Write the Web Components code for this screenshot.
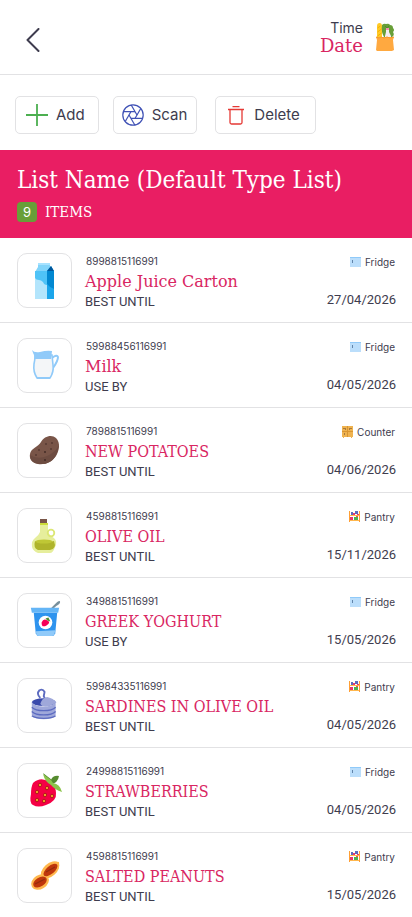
<!DOCTYPE html>
<html lang="en">
<head>
<meta charset="utf-8">
<meta name="viewport" content="width=device-width, initial-scale=1">
<title>Shopping list</title>
<style>
  :root {
    --ink: #3e3c4e;
    --pink: #e91e63;
    --name: #d92662;
    --line: #e2e2e4;
    --slab: "DejaVu Serif Condensed", "DejaVu Serif", serif;
    --slab-wide: "DejaVu Serif", serif;
  }
  body { margin: 0; background: #fff; color: var(--ink); font-family: Inter, "Liberation Sans", sans-serif; }
</style>
</head>
<body>
<list-page>
  <page-header slot="header" time="Time" date="Date"></page-header>
  <action-bar slot="actions">
    <action-button icon="add">Add</action-button>
    <action-button icon="scan">Scan</action-button>
    <action-button icon="delete" wide>Delete</action-button>
  </action-bar>
  <list-banner slot="banner" count="9">List Name (Default Type List)</list-banner>
  <food-item icon="carton" code="8998815116991" rule="BEST UNTIL" place="Fridge" date="27/04/2026">Apple Juice Carton</food-item>
  <food-item icon="jug" code="59988456116991" rule="USE BY" place="Fridge" date="04/05/2026">Milk</food-item>
  <food-item icon="potato" code="7898815116991" rule="BEST UNTIL" place="Counter" date="04/06/2026">NEW POTATOES</food-item>
  <food-item icon="oil" code="4598815116991" rule="BEST UNTIL" place="Pantry" date="15/11/2026">OLIVE OIL</food-item>
  <food-item icon="yoghurt" code="3498815116991" rule="USE BY" place="Fridge" date="15/05/2026">GREEK YOGHURT</food-item>
  <food-item icon="sardines" code="59984335116991" rule="BEST UNTIL" place="Pantry" date="04/05/2026">SARDINES IN OLIVE OIL</food-item>
  <food-item icon="strawberry" code="24998815116991" rule="BEST UNTIL" place="Fridge" date="04/05/2026">STRAWBERRIES</food-item>
  <food-item icon="peanut" code="4598815116991" rule="BEST UNTIL" place="Pantry" date="15/05/2026">SALTED PEANUTS</food-item>
</list-page>
<script>
const ICONS = {
  back: ['0 0 14 24', '<path d="M12.5 1 1.5 12l11 11" fill="none" stroke="#3e3c4e" stroke-width="2" stroke-linecap="round" stroke-linejoin="round"/>'],
  bag: ['0 0 20 30', `<path d="M2 15V4q0-3 2.500-3Q7 1 7 4v11z" fill="#ffca28"/><path d="m2.500 6 3-2M2.500 10l4-3M2.500 14l4-3" stroke="#f5b000" stroke-width="1"/>
    <path d="M7 3q2-2 4-1 3-1 4 1 3 0 3 3 2 2 0 4 2 3-1 5H9q-3-5-2-12z" fill="#689f38"/><path d="m10 4 2 2 2-2" stroke="#4b8128" stroke-width=".7" fill="none"/>
    <path d="M11 8h3v2l2 4v2h-6v-2l1-4z" fill="#f5eef4"/><path d="M11 6h3v2h-3z" fill="#f48fb1"/>
    <path d="M1 15h18l-1 3 1 10-2 1H2l-1-1 1-10z" fill="#ffa940"/><path d="m1 15 3 1 2-1 3 1 3-1 3 1 4-1" stroke="#f59a2c" fill="none"/>`],
  add: ['0 0 22 22', '<path d="M11 0v22M0 11h22" stroke="#4caf50" stroke-width="1.800"/>'],
  scan: ['0 0 22 22', `<g fill="none" stroke="#3f51b5" stroke-width="1.200"><circle cx="11" cy="11" r="10.200"/>
    ${[0,60,120,180,240,300].map(a => `<path transform="rotate(${a} 11 11)" d="M15 11 9.200 1"/>`).join('')}</g>`],
  delete: ['0 0 16 19', '<path d="M0 3.500h16M4.500.700h7M2 4v12.500q0 1.500 1.500 1.500h9q1.500 0 1.500-1.500V4" fill="none" stroke="#e53935" stroke-width="1.300"/>'],
  carton: ['1 1 40 40', `<path d="M11 12 14 7V3h12v4l-3 6z" fill="#81d4fa"/><path d="M14 3h12v2H14z" fill="#a7e2ff"/><path d="M11 11h12v28H11z" fill="#b3e5fc"/><path d="M23 11l4-5 3 5v28h-7z" fill="#039be5"/><path d="m23 11 4-5 3 5z" fill="#01579b"/><path d="M11 11h12v14q-3 0-4-3-2-2-4-2-3 0-4-2z" fill="#4fc3f7"/><path d="M23 11h7v18q-4-1-7-5z" fill="#0288d1"/><path d="M23 24q3 4 7 5v10h-7z" fill="#1ba5ea"/>`],
  jug: ['1 3 40 40', `<path d="M28 15q5-4 6-1 0 4-5 11" fill="none" stroke="#90caf9" stroke-width="2"/><path d="M11 12q0 5-1 9-1 8 3 14h13q4-6 3-13l-1-10z" fill="#f4f6f8" stroke="#90caf9" stroke-width="1.600"/><path d="M8 7q2 3 8 2 7-2 12-1l-1 8H11l-1-4q-1-2-2-5z" fill="#90caf9"/><path d="M13 34h13v2H13z" fill="#90caf9"/>`],
  potato: ['0 1 40 40', `<path d="M16 12C19 6 27 4 31 8c5 5 3 13 0 18-4 6-11 9-18 8-6-1-9-5-8-10 1-6 8-7 11-12z" fill="#795548"/><path d="M5 25q8 5 17 1 9-4 12-11-1 7-4 12-5 8-16 7-9-1-9-9z" fill="#6d4c41"/><g fill="#3e2723"><circle cx="21" cy="14" r=".800"/><circle cx="27" cy="13" r=".800"/><circle cx="14" cy="20" r=".800"/><circle cx="20" cy="22" r=".900"/><circle cx="26" cy="19" r=".800"/><circle cx="11" cy="25" r=".800"/><circle cx="20" cy="30" r=".900"/></g>`],
  oil: ['1 1 40 40', `<path d="M16 8h8v9q1 3 6 6 4 4 1 9-2 6-5 6H14q-5-2-6-6-1-6 3-9 4-3 5-6z" fill="#e6ee9c"/><circle cx="27" cy="18" r="3.300" fill="none" stroke="#dce775" stroke-width="1.800"/><path d="M11 26q6 4 19 0 3 8-4 9H14q-5-2-3-9z" fill="#afb42b"/><ellipse cx="20" cy="26.500" rx="8.500" ry="2" fill="#bfc735"/><path d="M16 8h8v2h-8z" fill="#cddc39"/><path d="M16 4h7v4h-7z" fill="#795548"/>`],
  yoghurt: ['1 2 41 41', `<path d="m28 9 6-6q3-2 3 0 0 2-4 4l-3 3z" fill="#78909c"/><path d="M10 14h24l-2 21-2 3H14l-2-3z" fill="#2e93ee"/><path d="M7 9h29l-1 5H8z" fill="#64b5f6"/><path d="m12 33 20-1-1 5-2 1H15l-2-1z" fill="#90caf9"/><circle cx="22" cy="24" r="7" fill="#fff"/><path d="M18 24q2-5 6-2 4 2-1 5-5 3-5-3z" fill="#f50057"/><path d="m22 20 3-1 2 4-3-1z" fill="#558b2f"/>`],
  sardines: ['-2 -1 47 47', `<path d="M16 13q-5-5-1-9 4-2 6 2l-1 5 2 4" fill="none" stroke="#5c6bc0" stroke-width="2.200"/><ellipse cx="20" cy="18" rx="14" ry="4.500" fill="#3949ab"/><path d="M6 18q4 5 14 5t14-5v15q-3 5-14 5T6 33z" fill="#9fa8da"/><path d="M16 20q2-7 8-8 6 1 11 6-5 4-13 5-5 0-6-3z" fill="#9fa8da"/><path d="M6 24q4 4 14 4t14-4M6 29q4 4 14 4t14-4M6 34q4 3 14 3t14-3" fill="none" stroke="#5c6bc0" stroke-width="1.600"/>`],
  strawberry: ['0 0 40 40', `<path d="M8 12q8-7 16-1 7 4 7 11 1 8-10 12-8 3-13 0-4-2-2-11 0-7 2-11z" fill="#f50045"/><path d="m18 2 9 7q-5 2-9-7zm8 7q2-5 8-4-1 7-8 8z" fill="#558b2f"/><path d="m18 3 8 6 2 3q7 1 9 9-7-2-11-7-6-3-8-11z" fill="#8bc34a"/>${[[15,14],[22,17],[12,21],[20,24],[12,29],[19,30],[27,25]].map(p=>`<ellipse cx="${p[0]}" cy="${p[1]}" rx="2" ry="2.200" transform="rotate(30 ${p[0]} ${p[1]})" fill="#b71c1c"/><circle cx="${p[0]}" cy="${p[1]}" r="1" fill="#ffca28"/>`).join('')}`],
  peanut: ['0 0 40 40', `<g fill="#ffb74d"><ellipse cx="25" cy="14" rx="11" ry="6.500" transform="rotate(-42 25 14)"/><ellipse cx="15" cy="26" rx="9.500" ry="7" transform="rotate(-32 15 26)"/><path d="M28 7q4-2 6-1 1 4-1 8z"/></g><g fill="#bf360c"><ellipse cx="25.500" cy="14" rx="8.500" ry="4" transform="rotate(-40 25.500 14)"/><ellipse cx="15" cy="26" rx="7.500" ry="4.500" transform="rotate(-32 15 26)"/></g><path d="m21 16 9-5M10 28l10-5" stroke="#932c0d" stroke-width="1.200"/>`],
  Fridge: ['0 0 11 10', '<path d="M0 0h11v10H0z" fill="#bbdefb"/><path d="M0 0h11v1H0z" fill="#90caf9"/><path d="M2 3h1v3H2z" fill="#6285ab"/>'],
  Counter: ['0 0 11 12', '<path d="M0 0h11v11h-1v1H9v-1H2v1H1v-1H0z" fill="#efb350"/><path d="M5 0h1v5H5zM0 5h11v1H0zM5 6h1v5H5z" fill="#d99531"/><path d="M1 2h3v1H1zm6 0h3v1H7zM3 3h1v1H3zm4 0h1v1H7zM2 7h1v2H2z" fill="#a87a3c"/>'],
  Pantry: ['0 0 11 12', '<path d="M1 4h9v1H1zm0 5h9v1H1z" fill="#ffb74d"/><path d="M0 0h1v11H0zm10 0h1v11h-1z" fill="#ff9f35"/><path d="M2 1h2v3H2zm4-1h3v3H6z" fill="#5c6bc0"/><path d="M4 2h2v2H4zm4 1h2v1H8zM1 6h3v3H1z" fill="#e53970"/><path d="M5 6h4v3H5z" fill="#4caf50"/><path d="M7 5h2v1H7z" fill="#ef5350"/>']
};

function define(name, html, setup) {
  const template = document.createElement('template');
  template.innerHTML = html;
  customElements.define(name, class extends HTMLElement {
    connectedCallback() {
      if (this.shadowRoot) return;
      this.attachShadow({ mode: 'open' }).append(template.content.cloneNode(true));
      if (setup) setup(this, s => this.shadowRoot.querySelector(s));
    }
  });
}

function icon(name) {
  const el = document.createElement('app-icon');
  el.setAttribute('name', name);
  return el;
}

define('app-icon', `<style>:host{display:block;flex:none} svg{display:block;width:100%;height:100%}</style><svg aria-hidden="true"></svg>`,
  (el, $) => {
    const [box, shapes] = ICONS[el.getAttribute('name')];
    $('svg').setAttribute('viewBox', box);
    $('svg').innerHTML = shapes;
  });

define('list-page', `<style>:host{display:block}</style>
  <slot name="header"></slot><main><slot name="actions"></slot><slot name="banner"></slot><div role="list"><slot></slot></div></main>`);

define('page-header', `<style>
  :host{display:block}
  header{display:flex;align-items:center;justify-content:space-between;height:74px;padding:0 17px 0 18px;border-bottom:1px solid var(--line)}
  button{display:grid;place-items:center;width:30px;height:40px;margin-top:6px;padding:0;border:0;background:none}
  .back{width:14px;height:24px}
  .side{display:flex;align-items:center;gap:12px}
  .when{display:grid;text-align:right;line-height:18px;font-size:14px}
  .date{font:18px/18px var(--slab-wide);color:var(--name)}
  .bag{width:20px;height:30px}
</style>
<header><button type="button" aria-label="Back"><app-icon class="back" name="back"></app-icon></button>
<div class="side"><div class="when"><span class="time"></span><span class="date"></span></div><app-icon class="bag" name="bag"></app-icon></div></header>`,
  (el, $) => { $('.time').textContent = el.getAttribute('time'); $('.date').textContent = el.getAttribute('date'); });

define('action-bar', `<style>:host{display:flex;align-items:center;gap:14px;padding:21px 15px 16px}</style><slot></slot>`);

define('action-button', `<style>
  :host{display:block}
  :host([wide]){margin-left:4px}
  button{display:flex;align-items:center;gap:8px;height:38px;padding:0 13px 0 10px;border:1px solid var(--line);border-radius:5px;background:#fff;color:inherit;font:15px/20px Inter,"Liberation Sans",sans-serif}
  app-icon{width:22px;height:22px}
  :host([icon="scan"]) button{padding:0 9px 0 8px}
  :host([wide]) button{padding:0 15px 0 12px;gap:10px}
  :host([wide]) app-icon{width:16px;height:19px}
</style><button type="button"><span><slot></slot></span></button>`,
  (el, $) => $('button').prepend(icon(el.getAttribute('icon'))));

define('list-banner', `<style>
  :host{display:block;padding:16px 17px;background:var(--pink);color:#fff}
  h1{margin:0;font:400 24px/28px var(--slab)}
  p{display:flex;align-items:center;gap:8px;margin:8px 0 0;font:15px/20px var(--slab)}
  .count{width:20px;border-radius:4px;background:#689f38;text-align:center;font:13px/20px Inter,sans-serif}
</style><h1><slot></slot></h1><p><span class="count"></span>ITEMS</p>`,
  (el, $) => { $('.count').textContent = el.getAttribute('count'); });

define('food-item', `<style>
  :host{display:flex;align-items:flex-start;gap:13px;padding:15px 16px 12px 17px;border-bottom:1px solid var(--line)}
  :host(:last-of-type){border-bottom:0}
  .thumb{display:grid;place-items:center;width:53px;height:53px;border:1px solid var(--line);border-radius:10px}
  .thumb app-icon{width:40px;height:40px}
  .info{flex:1;display:grid;grid-template-rows:17px 24px 16px;font:13px/16px Roboto,Inter,sans-serif}
  .code{font:10px/16px Inter,sans-serif;padding-left:1px}
  h2{margin:0;font:400 16px/24px var(--slab);color:var(--name);white-space:nowrap}
  h2.mixed{font-family:var(--slab-wide)}
  .side{display:grid;justify-items:end;row-gap:21px}
  .place{display:flex;align-items:center;gap:4px;padding-right:1px;font-size:10px;line-height:18px}
  .place app-icon{width:11px;height:12px}
  time{font:13px/16px Roboto,Inter,sans-serif}
</style>
<div class="thumb"></div>
<div class="info"><span class="code"></span><h2><slot></slot></h2><span class="rule"></span></div>
<div class="side"><span class="place"></span><time></time></div>`,
  (el, $) => {
    el.setAttribute('role', 'listitem');
    const get = n => el.getAttribute(n);
    $('h2').classList.toggle('mixed', /[a-z]/.test(el.textContent));
    $('.thumb').append(icon(get('icon')));
    $('.code').textContent = get('code');
    $('.rule').textContent = get('rule');
    $('.place').append(icon(get('place')), get('place'));
    $('time').textContent = get('date');
    $('time').dateTime = get('date').split('/').reverse().join('-');
  });
</script>
</body>
</html>
